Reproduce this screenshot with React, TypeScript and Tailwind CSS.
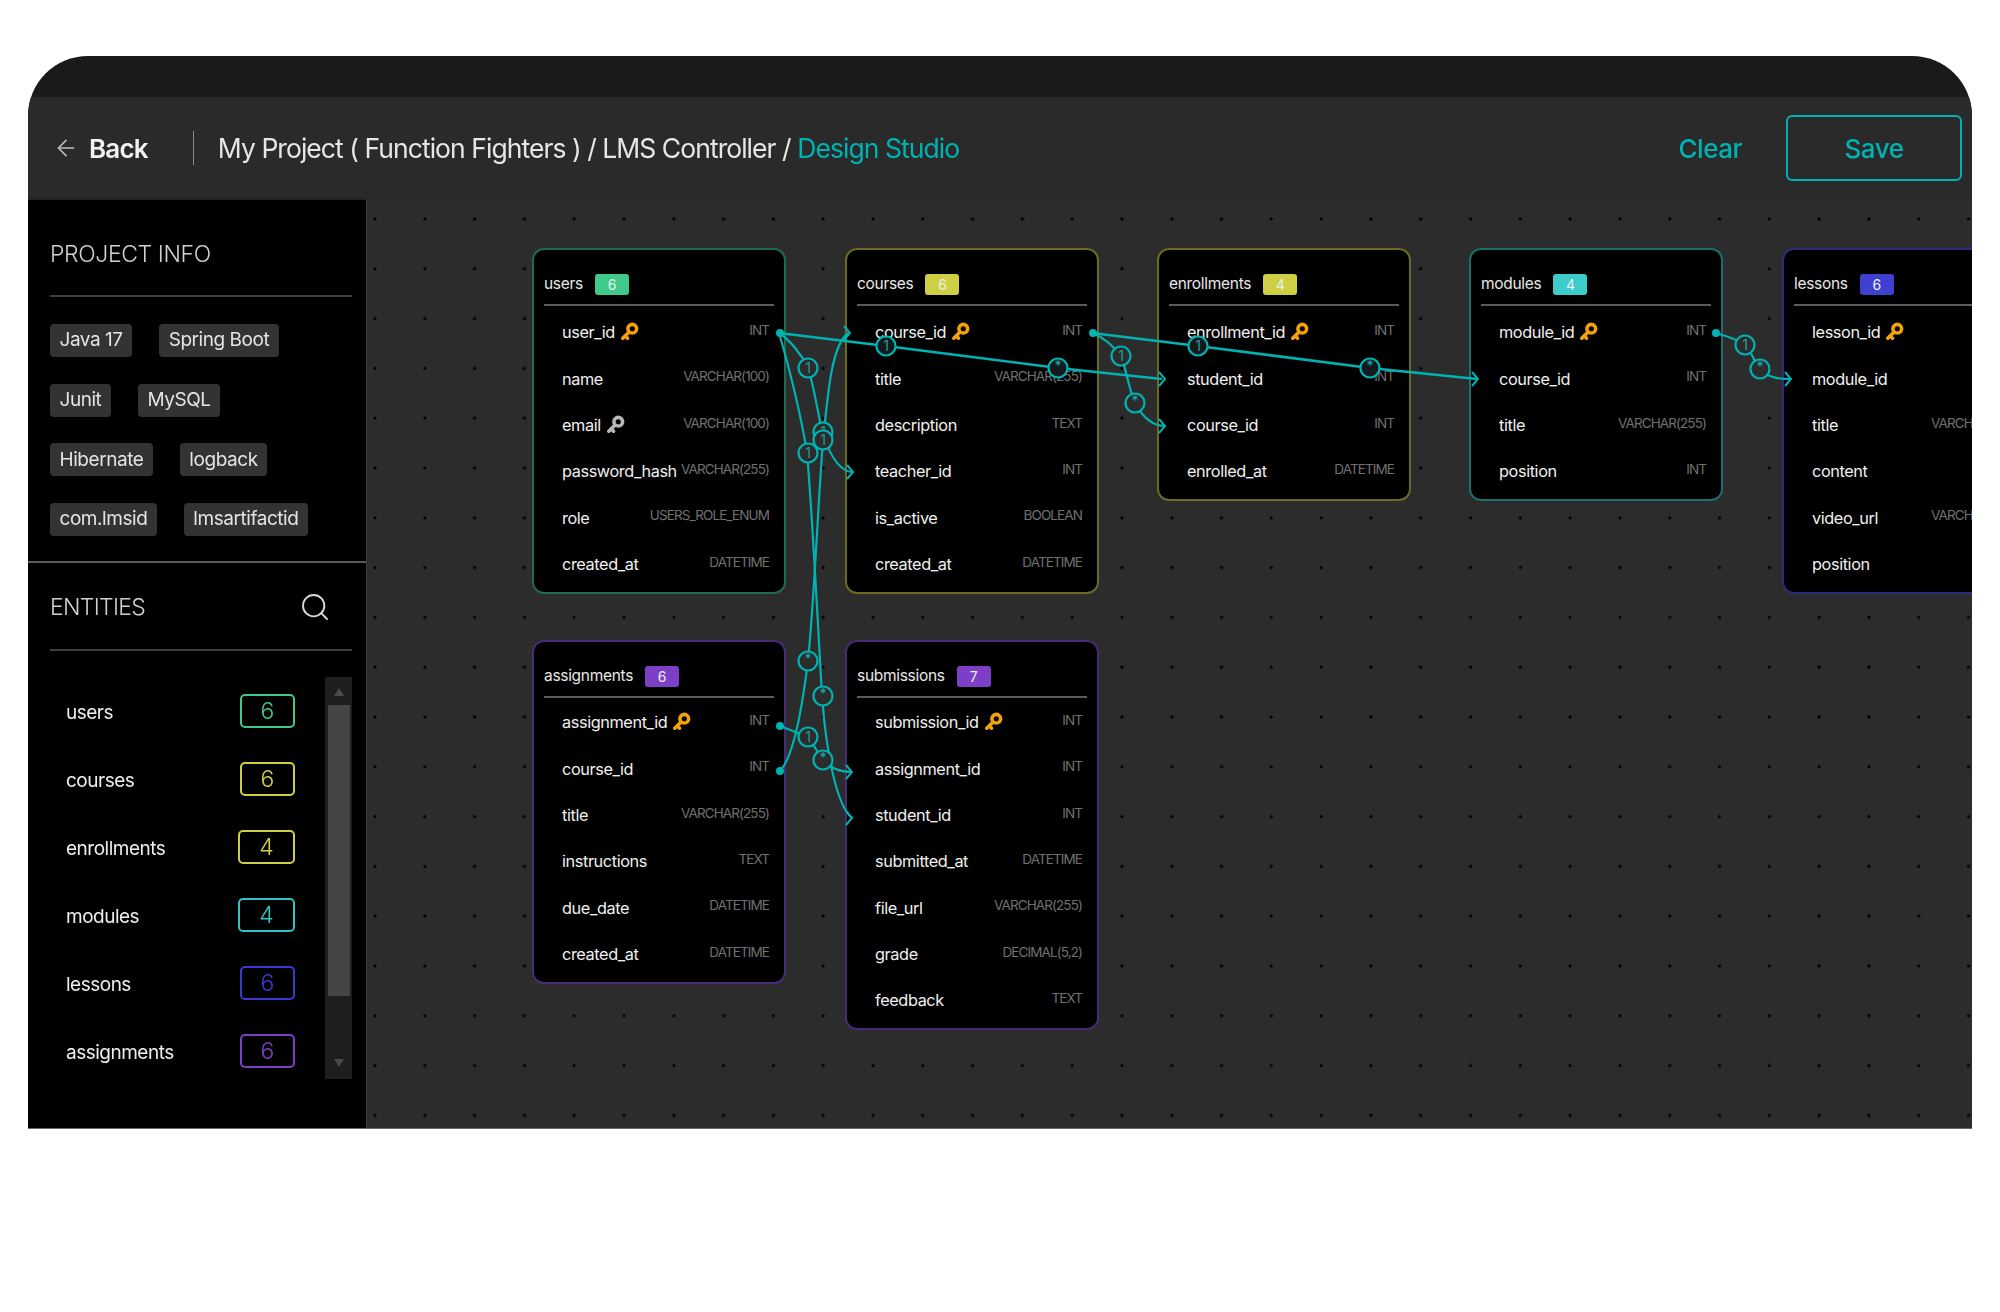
import { ArrowLeft, Search } from "lucide-react";

type Col = { n: string; t: string; key?: "o" | "g" };
type Tbl = { name: string; pos: string; border: string; badge: string; count: number; rowGap: string; cols: Col[] };

const tables: Tbl[] = [
  { name: "users", pos: "left-[165px] top-[50px]", border: "border-[#1f6b52]", badge: "bg-[#3fc98a]", count: 6, rowGap: "mt-[3.5px]", cols: [
    { n: "user_id", t: "INT", key: "o" }, { n: "name", t: "VARCHAR(100)" }, { n: "email", t: "VARCHAR(100)", key: "g" },
    { n: "password_hash", t: "VARCHAR(255)" }, { n: "role", t: "USERS_ROLE_ENUM" }, { n: "created_at", t: "DATETIME" } ] },
  { name: "courses", pos: "left-[478px] top-[50px]", border: "border-[#6b6b24]", badge: "bg-[#cfcf45]", count: 6, rowGap: "mt-[3.5px]", cols: [
    { n: "course_id", t: "INT", key: "o" }, { n: "title", t: "VARCHAR(255)" }, { n: "description", t: "TEXT" },
    { n: "teacher_id", t: "INT" }, { n: "is_active", t: "BOOLEAN" }, { n: "created_at", t: "DATETIME" } ] },
  { name: "enrollments", pos: "left-[790px] top-[50px]", border: "border-[#6b6b24]", badge: "bg-[#cfcf45]", count: 4, rowGap: "mt-[3.5px]", cols: [
    { n: "enrollment_id", t: "INT", key: "o" }, { n: "student_id", t: "INT" }, { n: "course_id", t: "INT" }, { n: "enrolled_at", t: "DATETIME" } ] },
  { name: "modules", pos: "left-[1102px] top-[50px]", border: "border-[#1b6e6e]", badge: "bg-[#3ccccc]", count: 4, rowGap: "mt-[3.5px]", cols: [
    { n: "module_id", t: "INT", key: "o" }, { n: "course_id", t: "INT" }, { n: "title", t: "VARCHAR(255)" }, { n: "position", t: "INT" } ] },
  { name: "lessons", pos: "left-[1415px] top-[50px]", border: "border-[#2d2b80]", badge: "bg-[#4040d0]", count: 6, rowGap: "mt-[3.5px]", cols: [
    { n: "lesson_id", t: "INT", key: "o" }, { n: "module_id", t: "INT" }, { n: "title", t: "VARCHAR(255)" },
    { n: "content", t: "TEXT" }, { n: "video_url", t: "VARCHAR(255)" }, { n: "position", t: "INT" } ] },
  { name: "assignments", pos: "left-[165px] top-[442px]", border: "border-[#472a78]", badge: "bg-[#7e3fc8]", count: 6, rowGap: "mt-[1.5px]", cols: [
    { n: "assignment_id", t: "INT", key: "o" }, { n: "course_id", t: "INT" }, { n: "title", t: "VARCHAR(255)" },
    { n: "instructions", t: "TEXT" }, { n: "due_date", t: "DATETIME" }, { n: "created_at", t: "DATETIME" } ] },
  { name: "submissions", pos: "left-[478px] top-[442px]", border: "border-[#472a78]", badge: "bg-[#7e3fc8]", count: 7, rowGap: "mt-[1.5px]", cols: [
    { n: "submission_id", t: "INT", key: "o" }, { n: "assignment_id", t: "INT" }, { n: "student_id", t: "INT" }, { n: "submitted_at", t: "DATETIME" },
    { n: "file_url", t: "VARCHAR(255)" }, { n: "grade", t: "DECIMAL(5,2)" }, { n: "feedback", t: "TEXT" } ] },
];

const entities = [
  { n: "users", c: 6, cls: "w-[55px] border-[#3fc98a] text-[#3fc98a]" },
  { n: "courses", c: 6, cls: "w-[55px] border-[#cfcf45] text-[#cfcf45]" },
  { n: "enrollments", c: 4, cls: "w-[57px] border-[#cfcf45] text-[#cfcf45]" },
  { n: "modules", c: 4, cls: "w-[57px] border-[#30c4c4] text-[#30c4c4]" },
  { n: "lessons", c: 6, cls: "w-[55px] border-[#3a3ad0] text-[#3a3ad0]" },
  { n: "assignments", c: 6, cls: "w-[55px] border-[#7e3fc8] text-[#7e3fc8]" },
];

const chips = [["Java 17", "Spring Boot"], ["Junit", "MySQL"], ["Hibernate", "logback"], ["com.lmsid", "lmsartifactid"]];

function KeyIcon({ color }: { color: string }) {
  return (
    <svg width="19" height="19" viewBox="0 0 24 24" fill="none" stroke={color} strokeWidth="4.5" strokeLinecap="round" className="ml-[5px] -mt-[2px] shrink-0">
      <circle cx="15.5" cy="8.5" r="5.5" />
      <path d="M11.5 12.5 3.5 20.5M6.5 17.5l3 3" />
    </svg>
  );
}

function Table({ t }: { t: Tbl }) {
  return (
    <div className={`absolute ${t.pos} w-[254px] rounded-[12px] border-2 ${t.border} bg-black px-[10px] pb-[4.5px]`}>
      <div className="flex h-[54px] items-center gap-[12px] pt-[14px] text-[15.5px] tracking-[-0.3px] text-[#e8e8e8]">
        <span>{t.name}</span>
        <span className={`flex h-[21px] w-[34px] items-center justify-center rounded-[3px] text-[14px] text-[#e8f0e8] ${t.badge}`}>{t.count}</span>
      </div>
      <div className="h-[2px] bg-[#5c5c5c]" />
      <div className={t.rowGap}>
        {t.cols.map((c) => (
          <div key={c.n} className="flex h-[46.3px] items-center justify-between pl-[18px] pr-[5px]">
            <div className="flex items-center text-[16.3px] tracking-[-0.4px] text-[#f0f0f0]">
              <span>{c.n}</span>
              {c.key && <KeyIcon color={c.key === "o" ? "#f5a20a" : "#b8b8b8"} />}
            </div>
            <span className="-mt-[5px] whitespace-nowrap text-[13.5px] tracking-[-0.9px] text-[#707070]">{c.t}</span>
          </div>
        ))}
      </div>
    </div>
  );
}

const T = "#00b3b3";

function Chev({ x, y }: { x: number; y: number }) {
  return <path d={`M${x - 6} ${y - 7} L${x} ${y} L${x - 6} ${y + 7}`} fill="none" stroke={T} strokeWidth="2" />;
}
function Mark({ x, y, s, dark }: { x: number; y: number; s: "1" | "*"; dark?: boolean }) {
  return (
    <g>
      <circle cx={x} cy={y} r="9.5" fill={dark ? "#14191c" : "#2c2c2c"} stroke={T} strokeWidth="2.2" />
      <text x={x} y={s === "1" ? y + 5 : y + 3} textAnchor="middle" fontSize="14" fill={s === "1" ? "#1ea3a3" : "#12b8b8"} fontFamily="Inter, sans-serif">
        {s}
      </text>
    </g>
  );
}

function Links() {
  const lines = [
    { d: "M779 333 L886 346 L1058 368 L1162 379", w: 2.6 },
    { d: "M1092 333 L1198 346 L1370 368 L1477 379", w: 2.6 },
    { d: "M1716 333 C1730 337 1738 340 1745 345 C1752 352 1754 362 1760 369 C1768 377 1776 379 1790 379", w: 2.2 },
    { d: "M1092 333 C1105 338 1115 348 1121 356 C1127 372 1129 390 1135 403 C1142 416 1152 426 1165 426", w: 2.2 },
    { d: "M779 333 C790 340 802 355 808 368 C815 390 818 415 823 435 C830 455 840 472 853 472", w: 2.2 },
    { d: "M779 333 C790 370 802 420 807 453 C812 510 816 590 822 696 C826 750 836 805 852 818", w: 2.2 },
    { d: "M780 771 C795 755 803 700 808 661 C815 590 818 500 823 442 C828 390 832 345 848 333", w: 2.2 },
    { d: "M780 726 L808 737 L823 760 C830 768 840 772 852 772", w: 2.2 },
  ];
  return (
    <svg className="pointer-events-none absolute left-0 top-0" width="1605" height="931" viewBox="367 198 1605 931">
      {lines.map((l, i) => (
        <path key={i} d={l.d} fill="none" stroke={T} strokeWidth={l.w} />
      ))}
      {[[780, 333], [1093, 333], [1716, 333], [780, 726], [780, 771]].map(([x, y]) => (
        <circle key={`${x}${y}`} cx={x} cy={y} r="4" fill={T} />
      ))}
      <Chev x={850} y={333} />
      <Chev x={853} y={472} />
      <Chev x={852} y={772} />
      <Chev x={852} y={818} />
      <Chev x={1165} y={379} />
      <Chev x={1165} y={426} />
      <Chev x={1478} y={379} />
      <Chev x={1791} y={379} />
      <Mark x={808} y={368} s="1" />
      <Mark x={823} y={432} s="1" />
      <Mark x={823} y={440} s="1" />
      <Mark x={808} y={453} s="1" />
      <Mark x={808} y={661} s="*" />
      <Mark x={823} y={696} s="*" />
      <Mark x={808} y={737} s="1" />
      <Mark x={823} y={760} s="*" />
      <Mark x={886} y={346} s="1" dark />
      <Mark x={1058} y={368} s="*" dark />
      <Mark x={1121} y={356} s="1" />
      <Mark x={1135} y={403} s="*" />
      <Mark x={1198} y={346} s="1" dark />
      <Mark x={1370} y={368} s="*" dark />
      <Mark x={1745} y={345} s="1" />
      <Mark x={1760} y={369} s="*" />
    </svg>
  );
}

export default function App() {
  return (
    <div className="min-h-[1312px] w-[2000px] bg-white pl-[28px] pr-[28px] pt-[56px] font-[Inter,sans-serif]">
      <div className="flex h-[1073px] flex-col overflow-hidden rounded-t-[60px] border-b border-[#666] bg-[#1a1a1a] blur-[0.45px]">
        <div className="h-[41px] shrink-0" />
        <header className="flex h-[101px] shrink-0 items-center bg-[#2a2a2a] pl-[25px] pr-[10px]">
          <ArrowLeft size={26} strokeWidth={1.5} className="text-[#bdbdbd]" />
          <span className="ml-[10px] mt-[2px] text-[26px] font-semibold tracking-[-0.8px] text-[#f2f2f2]">Back</span>
          <div className="ml-[45px] h-[34px] w-px bg-[#888]" />
          <div className="ml-[24px] mt-[3px] text-[26.5px] tracking-[-0.95px] text-[#e6e6e6]">
            My Project ( Function Fighters ) / LMS Controller / <span className="text-[#00b3b3]">Design Studio</span>
          </div>
          <button className="ml-auto mt-[2px] text-[26px] font-medium tracking-[-0.5px] text-[#00b3b3]">Clear</button>
          <button className="ml-[44px] h-[66px] w-[176px] rounded-[6px] border-2 border-[#00b3b3] pt-[2px] text-[26px] font-medium tracking-[-0.5px] text-[#00b3b3]">Save</button>
        </header>
        <div className="flex min-h-0 flex-1">
          <aside className="flex w-[339px] shrink-0 flex-col border-r border-t-2 border-r-[#3c3c3c] border-t-[#222222] bg-black">
            <div className="pb-[25px] pl-[22px] pr-[14px] pt-[39px]">
              <div className="h-[30px] text-[23px] font-light leading-[30px] tracking-[-0.4px] text-[#d0d0d0]">PROJECT INFO</div>
              <div className="mt-[26px] h-[2px] bg-[#3e3e3e]" />
              <div className="mt-[27px] flex flex-col gap-[26.7px]">
                {chips.map((r) => (
                  <div key={r[0]} className="flex gap-[27px]">
                    {r.map((c) => (
                      <span key={c} className="flex h-[33px] items-center rounded-[4px] bg-[#333] px-[9.5px] text-[19px] tracking-[-0.45px] text-[#e4e4e4]">{c}</span>
                    ))}
                  </div>
                ))}
              </div>
            </div>
            <div className="h-[2px] bg-[#5a5a5a]" />
            <div className="pl-[22px] pr-[14px] pt-[29px]">
              <div className="flex h-[30px] items-center justify-between">
                <span className="text-[23px] font-light tracking-[-0.7px] text-[#d0d0d0]">ENTITIES</span>
                <Search size={32} strokeWidth={1.4} className="mr-[21px] text-[#d8d8d8]" />
              </div>
              <div className="mt-[27px] h-[2px] bg-[#3e3e3e]" />
              <div className="mt-[26px] flex h-[402px] justify-between">
                <div className="flex flex-1 flex-col gap-[34px] pl-[16px] pt-[17px]">
                  {entities.map((e) => (
                    <div key={e.n} className="flex h-[34px] items-center justify-between">
                      <span className="pt-[4px] text-[19px] tracking-[-0.5px] text-[#eeeeee]">{e.n}</span>
                      <span className={`flex h-[34px] items-center justify-center rounded-[5px] border-2 text-[23px] font-light ${e.cls}`}>{e.c}</span>
                    </div>
                  ))}
                </div>
                <div className="ml-[30px] flex w-[27px] flex-col items-center bg-[#1e1e1e]">
                  <svg width="12" height="10" viewBox="0 0 12 10" className="mt-[10px]"><path d="M6 1 11 9H1Z" fill="#4a4a4a" /></svg>
                  <div className="mt-[8px] h-[291px] w-[22px] bg-[#454545]" />
                  <svg width="12" height="10" viewBox="0 0 12 10" className="mt-[62px]"><path d="M6 9 11 1H1Z" fill="#4a4a4a" /></svg>
                </div>
              </div>
            </div>
          </aside>
          <main className="relative min-w-0 flex-1 overflow-hidden bg-[#2c2c2c] bg-[radial-gradient(circle,#000_1.3px,transparent_1.8px)] bg-[length:49.8px_49.8px] bg-[position:-16.9px_-3.9px]">
            {tables.map((t) => (
              <Table key={t.name} t={t} />
            ))}
            <Links />
          </main>
        </div>
      </div>
    </div>
  );
}
